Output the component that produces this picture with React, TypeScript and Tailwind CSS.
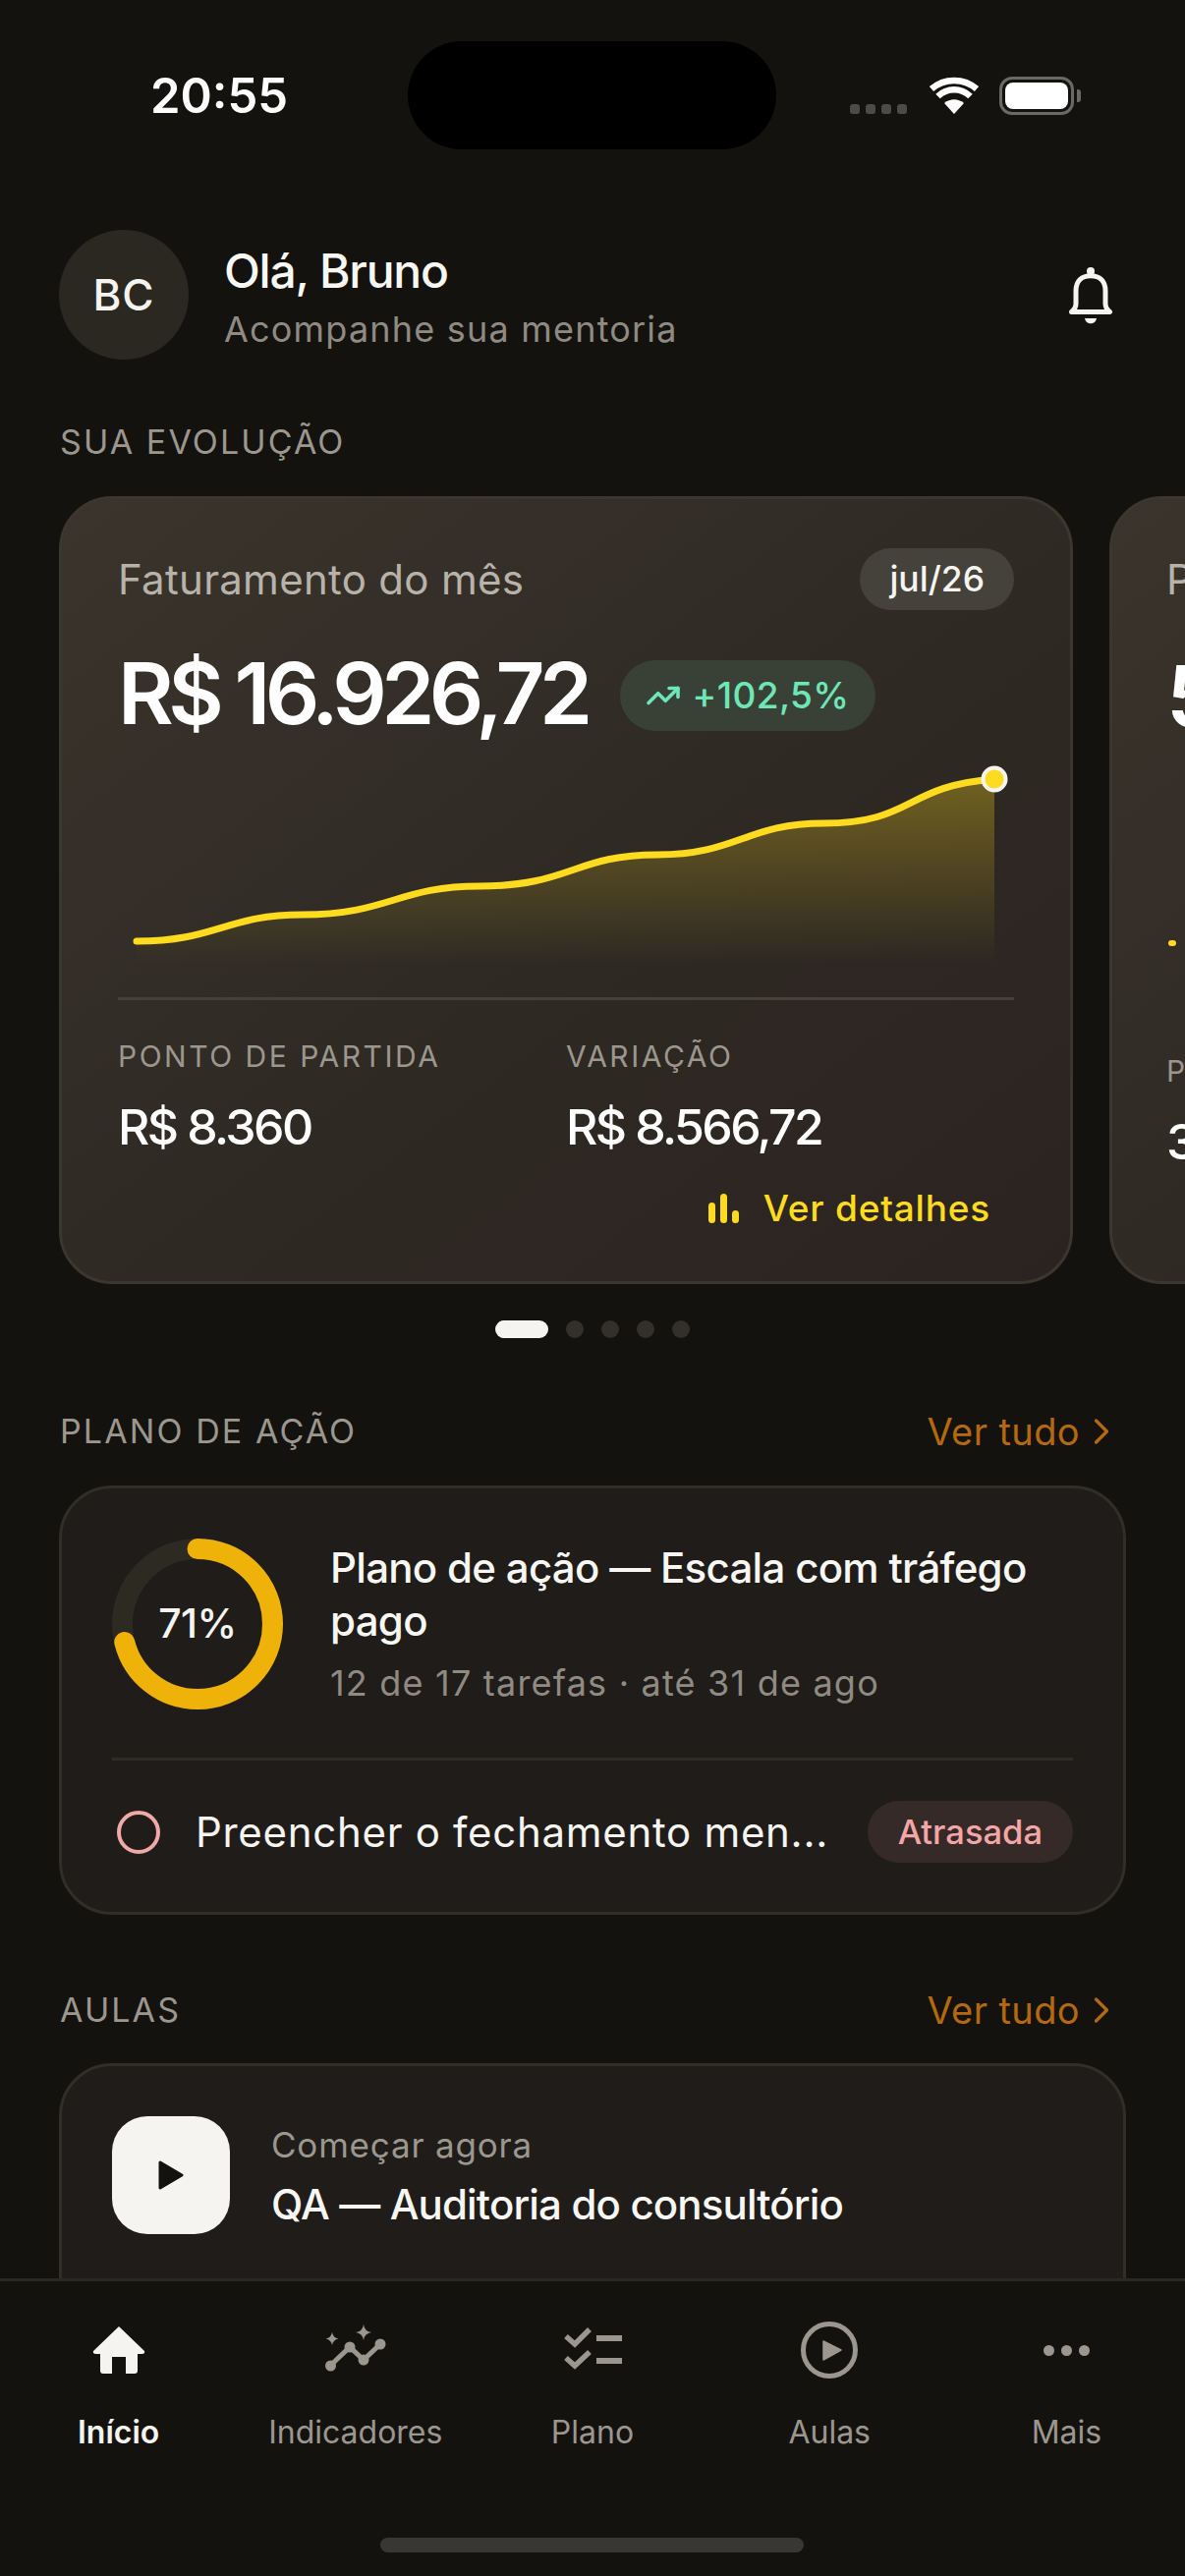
import type { ReactNode } from "react";
import { TrendingUp, ChevronRight } from "lucide-react";

function StatusBar() {
  return (
    <div className="flex h-[110px] mt-[42px]">
      <div className="w-[415px] pl-[153px] flex items-center">
        <span className="text-[49px] leading-none font-semibold text-white">20:55</span>
      </div>
      <div className="w-[375px] h-[110px] rounded-[55px] bg-black" />
      <div className="flex-1 pl-[75px] flex items-start pt-[36px]">
        <div className="flex gap-[6px] mt-[28px]">
          <span className="w-[10px] h-[10px] rounded-[3px] bg-[#4d4b48]" />
          <span className="w-[10px] h-[10px] rounded-[3px] bg-[#4d4b48]" />
          <span className="w-[10px] h-[10px] rounded-[3px] bg-[#4d4b48]" />
          <span className="w-[10px] h-[10px] rounded-[3px] bg-[#4d4b48]" />
        </div>
        {/* wifi */}
        <svg width="52" height="38" viewBox="0 0 52 38" className="ml-[22px]">
          <path d="M26 38 L16 27 C22 22 30 22 36 27 Z" fill="#fff" />
          <path d="M9.5 20 C19 11 33 11 42.5 20" fill="none" stroke="#fff" strokeWidth="6.5" />
          <path d="M3 12.5 C16 1 36 1 49 12.5" fill="none" stroke="#fff" strokeWidth="6.5" />
        </svg>
        {/* battery */}
        <div className="ml-[20px] w-[76px] h-[39px] rounded-[13px] border-[3.5px] border-[#6b6966] p-[3px]">
          <div className="w-full h-full rounded-[8px] bg-white" />
        </div>
        <div className="ml-[3px] mt-[13px] w-[4px] h-[13px] rounded-r-[3px] bg-[#6b6966]" />
      </div>
    </div>
  );
}

function SectionHeader({ title, link }: { title: string; link?: boolean }) {
  return (
    <div className="flex items-center justify-between h-[44px] pl-[61px] pr-[63px]">
      <span className="text-[34px] leading-[44px] tracking-[2.1px] text-[#9c978e]">{title}</span>
      {link && (
        <span className="flex items-center text-[38px] tracking-[0.4px] leading-[44px] text-[#b5690f]">
          Ver tudo
          <ChevronRight size={44} strokeWidth={1.8} className="text-[#b5690f]" />
        </span>
      )}
    </div>
  );
}

function Sparkline() {
  const d =
    "M19 188 C100 188 110 161 188 161 C275 161 285 132 368 132 C460 132 465 100 549 100 C630 100 640 68 718 68 C810 68 800 30 892 23";
  return (
    <svg width="911" height="215" viewBox="0 0 911 215" className="block mt-[26px]">
      <defs>
        <linearGradient id="area" x1="0" y1="0" x2="0" y2="1">
          <stop offset="0%" stopColor="#ffd91a" stopOpacity="0.32" />
          <stop offset="100%" stopColor="#ffd91a" stopOpacity="0" />
        </linearGradient>
      </defs>
      <path d={`${d} L892 210 L19 210 Z`} fill="url(#area)" />
      <path d={d} fill="none" stroke="#ffdb1f" strokeWidth="7" strokeLinecap="round" />
      <circle cx="892" cy="23" r="11.5" fill="#ffdb1f" stroke="#f5f4f0" strokeWidth="4" />
    </svg>
  );
}

const heroCard =
  "shrink-0 w-[1032px] h-[802px] rounded-[54px] border-[3px] border-[#3b372f] bg-gradient-to-br from-[#3a342c] via-[#2f2a24] to-[#2b2320] pt-[50px]";

function HeroCard() {
  return (
    <div className={`${heroCard} px-[57px]`}>
      <div className="flex items-center justify-between h-[63px]">
        <span className="text-[42px] tracking-[0.3px] text-[#b8b3aa]">Faturamento do mês</span>
        <span className="h-[63px] px-[30px] rounded-full bg-[#45413b] flex items-center text-[35.5px] font-medium text-[#f5f4f0]">
          jul/26
        </span>
      </div>
      <div className="flex items-center mt-[51px] h-[72px]">
        <span className="mb-[6px] text-[87px] leading-none font-semibold tracking-[-5.6px] text-white">R$ 16.926,72</span>
        <span className="ml-[33px] h-[72px] px-[26px] rounded-full bg-[#394137] flex items-center gap-[12px] text-[37px] font-medium tracking-[0.4px] text-[#6ee7b7]">
          <TrendingUp size={36} strokeWidth={2.4} />
          +102,5%
        </span>
      </div>
      <Sparkline />
      <div className="h-[3px] mt-[30px] bg-[#45403a]" />
      <div className="flex mt-[37px]">
        <div className="w-[456px]">
          <div className="text-[30px] leading-[40px] tracking-[2.5px] text-[#9c978e]">PONTO DE PARTIDA</div>
          <div className="mt-[22px] text-[50px] leading-[60px] font-medium tracking-[-2.6px] text-white">R$ 8.360</div>
        </div>
        <div>
          <div className="text-[30px] leading-[40px] tracking-[2.5px] text-[#9c978e]">VARIAÇÃO</div>
          <div className="mt-[22px] text-[50px] leading-[60px] font-medium tracking-[-2.6px] text-white">R$ 8.566,72</div>
        </div>
      </div>
      <div className="flex items-center justify-end mt-[29px] pr-[24px] h-[48px] gap-[25px]">
        <svg width="31" height="30" viewBox="0 0 31 30">
          <rect x="0" y="9" width="7" height="21" rx="3.5" fill="#ffdb1f" />
          <rect x="12" y="0" width="7" height="30" rx="3.5" fill="#ffdb1f" />
          <rect x="24" y="17" width="7" height="13" rx="3.5" fill="#ffdb1f" />
        </svg>
        <span className="text-[37px] font-medium tracking-[0.8px] text-[#ffdb1f]">Ver detalhes</span>
      </div>
    </div>
  );
}

// second card: only its left edge shows
function NextCard() {
  return (
    <div className={`${heroCard} px-[55px]`}>
      <div className="h-[63px] flex items-center text-[42px] tracking-[0.3px] text-[#b8b3aa]">Pacientes</div>
      <div className="mt-[51px] h-[72px] flex items-center text-[87px] leading-none font-semibold text-white">52</div>
      <div className="mt-[213px] ml-[2px] w-[8px] h-[6px] rounded-full bg-[#ffdb1f]" />
      <div className="mt-[107px] text-[30px] leading-[40px] tracking-[2.5px] text-[#9c978e]">PONTO</div>
      <div className="mt-[22px] text-[50px] leading-[60px] font-medium text-white">30</div>
    </div>
  );
}

function Ring() {
  const r = 76.5;
  const c = 2 * Math.PI * r;
  return (
    <div className="relative shrink-0 w-[174px] h-[174px]">
      <svg width="174" height="174" viewBox="0 0 174 174" className="-rotate-90">
        <circle cx="87" cy="87" r={r} fill="none" stroke="#2d2a22" strokeWidth="21" />
        <circle
          cx="87"
          cy="87"
          r={r}
          fill="none"
          stroke="#eeb208"
          strokeWidth="21"
          strokeLinecap="round"
          strokeDasharray={`${c * 0.71} ${c}`}
        />
      </svg>
      <span className="absolute inset-0 flex items-center justify-center text-[41px] font-medium tracking-[-0.5px] text-[#f5f4f0]">
        71%
      </span>
    </div>
  );
}

function PlanCard() {
  return (
    <div className="mx-[60px] h-[437px] rounded-[54px] border-[3px] border-[#312e29] bg-[#1f1c19] px-[51px] pt-[51px]">
      <div className="flex gap-[48px]">
        <Ring />
        <div className="mt-[3px]">
          <div className="text-[42px] leading-[54px] font-medium tracking-[-0.7px] text-[#f8f7f3]">
            Plano de ação — Escala com tráfego pago
          </div>
          <div className="mt-[12px] text-[36px] leading-[48px] tracking-[1.2px] text-[#8f8a82]">
            12 de 17 tarefas · até 31 de ago
          </div>
        </div>
      </div>
      <div className="h-[3px] mt-[49px] bg-[#2f2c27]" />
      <div className="flex items-center mt-[41px] h-[63px]">
        <span className="ml-[5px] w-[44px] h-[44px] rounded-full border-[4px] border-[#f0a8a8]" />
        <span className="ml-[36px] text-[42px] tracking-[0.7px] text-[#f5f4f0]">Preencher o fechamento men...</span>
        <span className="ml-auto h-[63px] px-[31px] rounded-full bg-[#362a28] flex items-center text-[34.5px] font-medium text-[#f4a6a6]">
          Atrasada
        </span>
      </div>
    </div>
  );
}

function LessonCard() {
  return (
    <div className="mx-[60px] h-[320px] rounded-t-[54px] border-[3px] border-[#312e29] bg-[#1f1c19] px-[51px] pt-[51px] flex gap-[42px]">
      <div className="w-[120px] h-[120px] rounded-[36px] bg-[#f5f4f0] flex items-center justify-center">
        <svg width="26" height="32" viewBox="0 0 26 32">
          <path d="M2 3 L24 16 L2 29 Z" fill="#14120e" stroke="#14120e" strokeWidth="3" strokeLinejoin="round" />
        </svg>
      </div>
      <div>
        <div className="mt-[5px] text-[35px] leading-[48px] tracking-[0.8px] text-[#9c978e]">Começar agora</div>
        <div className="mt-[9px] text-[42px] leading-[56px] font-medium tracking-[-0.85px] text-[#f8f7f3]">
          QA — Auditoria do consultório
        </div>
      </div>
    </div>
  );
}

function NavItem({ label, active, children }: { label: string; active?: boolean; children: ReactNode }) {
  return (
    <div className="flex flex-col items-center">
      <div className="h-[72px] flex items-center justify-center">{children}</div>
      <span
        className={`mt-[28px] text-[32px] leading-[40px] ${active ? "font-semibold text-[#f5f4f0]" : "text-[#9c978e]"}`}
      >
        {label}
      </span>
    </div>
  );
}

function BottomNav() {
  const grey = "#9c978e";
  return (
    <div className="absolute left-0 right-0 bottom-0 h-[303px] border-t-[3px] border-[#2b2824] bg-[#14120e]">
      <div className="grid grid-cols-5 pt-[34px]">
        <NavItem label="Início" active>
          <svg width="54" height="50" viewBox="0 0 54 50">
            <path
              d="M27 1 L53 26 Q54 29 50 29 L46 29 L46 46 Q46 49 43 49 L34 49 L34 32 L20 32 L20 49 L11 49 Q8 49 8 46 L8 29 L4 29 Q0 29 1 26 Z"
              fill="#f5f4f0"
            />
          </svg>
        </NavItem>
        <NavItem label="Indicadores">
          <svg width="62" height="56" viewBox="0 0 62 56">
            <path d="M5 44 L25 25 L39 38 L56 22" fill="none" stroke={grey} strokeWidth="5" />
            <circle cx="5.5" cy="44" r="5.5" fill={grey} />
            <circle cx="25" cy="25" r="5.5" fill={grey} />
            <circle cx="39" cy="38" r="5.5" fill={grey} />
            <circle cx="56" cy="22" r="5.5" fill={grey} />
            <path d="M39 2 Q40 9 47 10 Q40 11 39 18 Q38 11 31 10 Q38 9 39 2 Z" fill={grey} />
            <path d="M7 10 Q8 15.5 13.5 16.5 Q8 17.5 7 23 Q6 17.5 0.5 16.5 Q6 15.5 7 10 Z" fill={grey} />
          </svg>
        </NavItem>
        <NavItem label="Plano">
          <svg width="64" height="56" viewBox="0 0 64 56" className="ml-[2px]">
            <path d="M4 14 L13 22 L28 7" fill="none" stroke={grey} strokeWidth="5.5" />
            <path d="M4 36 L13 44 L28 30" fill="none" stroke={grey} strokeWidth="5.5" />
            <rect x="35" y="13" width="26" height="6" fill={grey} />
            <rect x="35" y="36" width="26" height="6" fill={grey} />
          </svg>
        </NavItem>
        <NavItem label="Aulas">
          <svg width="58" height="58" viewBox="0 0 58 58">
            <circle cx="29" cy="29" r="26.5" fill="none" stroke={grey} strokeWidth="5" />
            <path d="M23 20 L41 29 L23 39 Z" fill={grey} stroke={grey} strokeWidth="1.5" strokeLinejoin="round" />
          </svg>
        </NavItem>
        <NavItem label="Mais">
          <div className="flex gap-[7px]">
            <span className="w-[11px] h-[11px] rounded-full bg-[#9c978e]" />
            <span className="w-[11px] h-[11px] rounded-full bg-[#9c978e]" />
            <span className="w-[11px] h-[11px] rounded-full bg-[#9c978e]" />
          </div>
        </NavItem>
      </div>
      <div className="absolute left-[387px] bottom-[24px] w-[431px] h-[15px] rounded-full bg-[#393734]" />
    </div>
  );
}

export default function App() {
  return (
    <div className="relative w-[1206px] h-[2622px] overflow-hidden bg-[#14120e] font-[family-name:Inter,sans-serif]">
      <StatusBar />

      {/* Header */}
      <div className="flex items-center mt-[82px] px-[60px]">
        <div className="w-[132px] h-[132px] rounded-full bg-[#2b2822] flex items-center justify-center text-[44px] font-medium tracking-[1px] text-[#f5f4f0]">
          BC
        </div>
        <div className="ml-[36px] pt-[6px]">
          <div className="text-[48px] leading-[56px] font-medium tracking-[-1.2px] text-[#f8f7f3]">Olá, Bruno</div>
          <div className="mt-[7px] text-[36px] leading-[48px] tracking-[1.2px] text-[#8f8a82]">Acompanhe sua mentoria</div>
        </div>
        <svg width="48" height="60" viewBox="0 0 48 60" className="ml-auto mr-[13px]">
          <path
            d="M5.5 47.5 C8 45.5 10 43 10 39 L10 26 C10 16 16 10.8 25 10.8 C34 10.8 40 16 40 26 L40 39 C40 43 42 45.5 44.5 47.5 Z"
            fill="none"
            stroke="#f5f4f0"
            strokeWidth="5"
            strokeLinejoin="round"
          />
          <circle cx="25" cy="6" r="4" fill="#f5f4f0" />
          <path d="M19 54 L31 54 C30 61 20 61 19 54 Z" fill="#f5f4f0" />
        </svg>
      </div>

      <div className="mt-[62px]">
        <SectionHeader title="SUA EVOLUÇÃO" />
      </div>

      {/* Carousel */}
      <div className="flex gap-[37px] mt-[33px] pl-[60px]">
        <HeroCard />
        <NextCard />
      </div>
      <div className="flex justify-center items-center gap-[18px] mt-[37px]">
        <span className="w-[54px] h-[18px] rounded-full bg-[#f5f4f0]" />
        <span className="w-[18px] h-[18px] rounded-full bg-[#33302c]" />
        <span className="w-[18px] h-[18px] rounded-full bg-[#33302c]" />
        <span className="w-[18px] h-[18px] rounded-full bg-[#33302c]" />
        <span className="w-[18px] h-[18px] rounded-full bg-[#33302c]" />
      </div>

      <div className="mt-[73px]">
        <SectionHeader title="PLANO DE AÇÃO" link />
      </div>
      <div className="mt-[33px]">
        <PlanCard />
      </div>

      <div className="mt-[75px]">
        <SectionHeader title="AULAS" link />
      </div>
      <div className="mt-[32px]">
        <LessonCard />
      </div>

      <BottomNav />
    </div>
  );
}
